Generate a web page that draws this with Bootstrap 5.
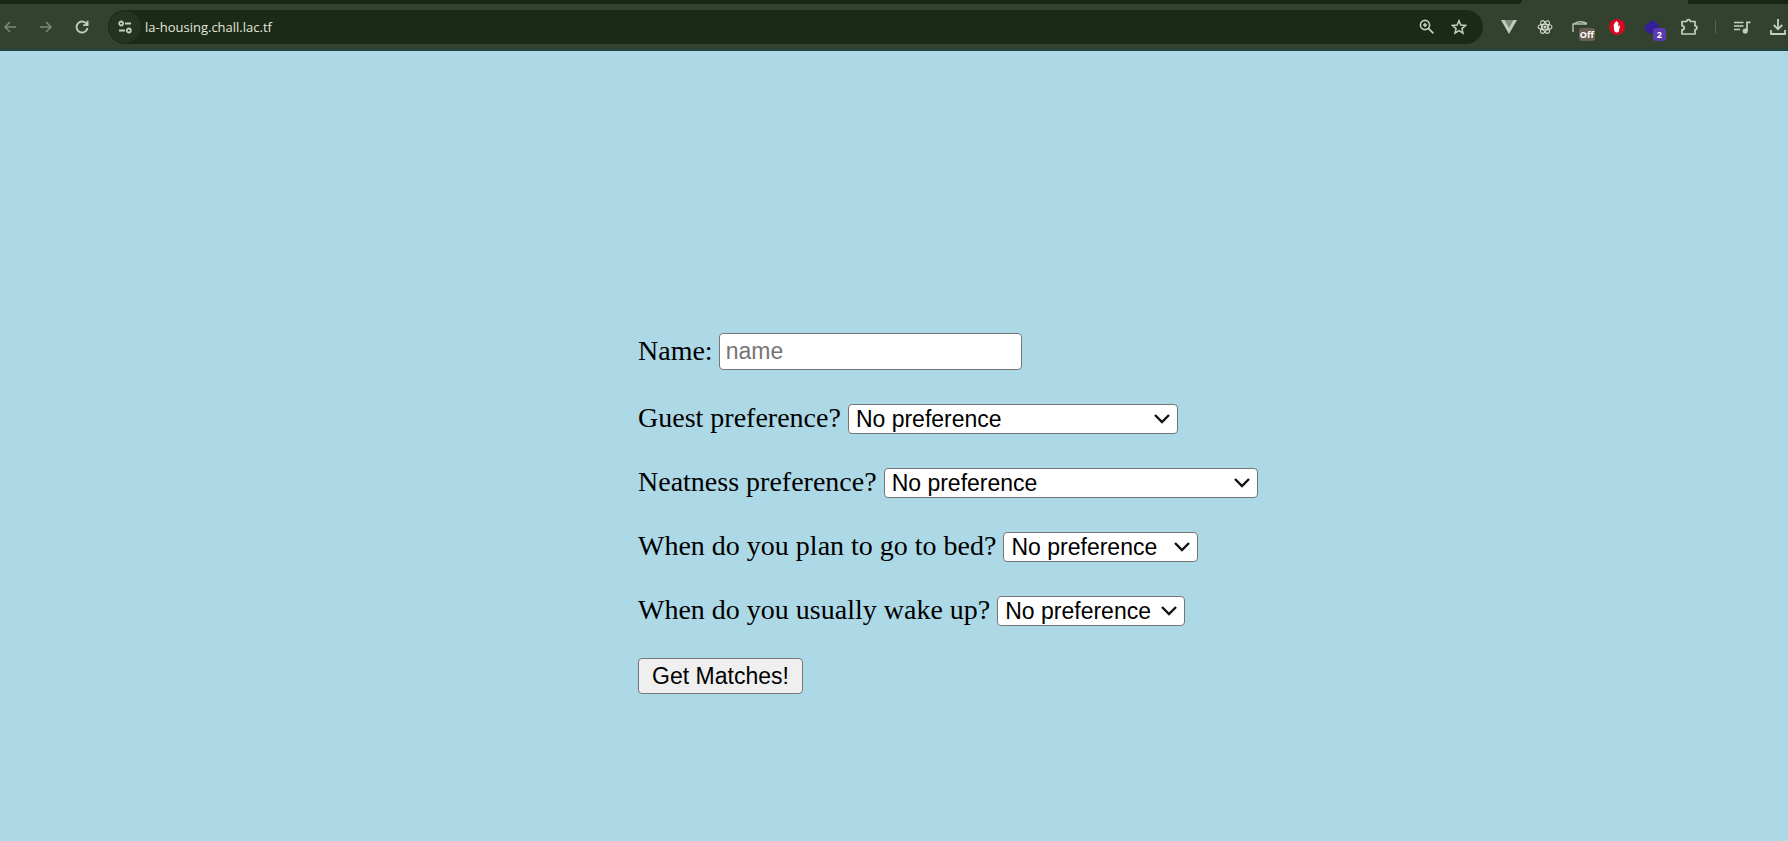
<!DOCTYPE html>
<html lang="en">
<head>
<meta charset="utf-8">
<meta name="viewport" content="width=device-width, initial-scale=1">
<title>LA Housing</title>
<link href="https://cdn.jsdelivr.net/npm/bootstrap@5.3.0/dist/css/bootstrap.min.css" rel="stylesheet">
<style>
  body { background: #add8e6; }
  .browser-bar { background: #33422f; border-bottom: 3px solid #27443b; height: 51px; overflow: hidden; }
  .tab-strip { height: 4px; }
  .tab-rest { background: #182512; }
  .tab-rest-start { border-bottom-right-radius: 4px; }
  .tab-rest-end { width: 100px; }
  .tab-current { width: 166px; }
  .tool-row { height: 44px; padding: 2px 0 0; margin: 0 -8px; }
  .tool { display: flex; align-items: center; justify-content: center; width: 36px; height: 36px; padding: 0; border: 0; background: none; color: #c3d0bd; flex: none; position: relative; }
  .tool:disabled { color: #7c8977; }
  .tool svg { display: block; }
  .address { height: 34px; background: #1c2917; border-radius: 17px; margin: 0 8px; padding-right: 8px; min-width: 0; }
  .address .tool { width: 32px; height: 32px; }
  .address-text { background: none; border: 0; outline: 0; color: #e0e8da; font: 13px/20px "Open Sans", "Noto Sans", sans-serif; min-width: 0; padding: 0 0 0 3px; }
  .address .site-info { background: #263321; border-radius: 50%; margin: 0 1px; }
  .counter { position: absolute; right: 5px; bottom: 4px; border-radius: 3px; padding: 0 3px; color: #fff; font: bold 9px/13px "Open Sans", sans-serif; }
  .counter-off { background: #6a5f50; right: 4px; padding: 0 1px; }
  .counter-two { background: #5a3aae; padding: 0 4px; }
  .tool-line { width: 1px; height: 14px; background: #53624e; margin: 0 8px; flex: none; }
  .page-area { padding: 282px 0 40px 108px; }
  .match-form { width: 620px; color: #000; font: 28px/32px "Liberation Serif", "Times New Roman", serif; }
  .match-form label { padding-bottom: 2px; }
  .form-line { height: 30px; margin-bottom: 34px; gap: 7px; white-space: nowrap; }
  .form-line-name { height: 37px; gap: 6px; }
  .form-line-last { margin-bottom: 32px; }
  .field { font: 23px/26px "Liberation Sans", Arial, sans-serif; color: #000; background-color: #fff; border: 1px solid #767676; border-radius: 4px; }
  .field-text { width: 303px; height: 37px; padding: 0 6px; }
  .field-text::placeholder { color: #757575; opacity: 1; }
  .field-pick { appearance: none; height: 30px; padding: 0 26px 0 7px; background-image: url("data:image/svg+xml,%3Csvg xmlns='http://www.w3.org/2000/svg' width='16' height='10' fill='none' stroke='%23111' stroke-width='2.4'%3E%3Cpath d='M1 1l7 7 7-7'/%3E%3C/svg%3E"); background-repeat: no-repeat; background-position: right 7px center; }
  .pick-guest { width: 330px; }
  .pick-neat { width: 375px; }
  .pick-bed { width: 195px; }
  .pick-wake { width: 188px; }
  .send { width: 165px; height: 36px; background: #efefef; padding: 0; }
</style>
</head>
<body>
<header class="browser-bar">
  <div class="tab-strip d-flex">
    <div class="tab-rest tab-rest-start flex-grow-1"></div>
    <div class="tab-current"></div>
    <div class="tab-rest tab-rest-end"></div>
  </div>
  <nav class="tool-row d-flex align-items-center" aria-label="Browser toolbar">
    <button class="tool" disabled aria-label="Back"><svg width="14" height="14" viewBox="0 0 14 14" fill="none" stroke="currentColor" stroke-width="1.5"><path d="M13 7H2M7 2L2 7l5 5"/></svg></button>
    <button class="tool" disabled aria-label="Forward"><svg width="14" height="14" viewBox="0 0 14 14" fill="none" stroke="currentColor" stroke-width="1.5"><path d="M1 7h11M7 2l5 5-5 5"/></svg></button>
    <button class="tool" aria-label="Reload"><svg width="14" height="14" viewBox="0 0 14 14" fill="none" stroke="currentColor" stroke-width="1.8"><path d="M12 4.5A5.5 5.5 0 1 0 12.5 8M12.6.8v4.4H8.2"/></svg></button>
    <div class="address d-flex align-items-center flex-grow-1">
      <button class="tool site-info" aria-label="Site information"><svg width="14" height="14" viewBox="0 0 14 14" fill="none" stroke="currentColor" stroke-width="1.8"><circle cx="3.2" cy="3.5" r="2"/><path d="M7 3.5h6M1 10.5h6"/><circle cx="10.8" cy="10.5" r="2"/></svg></button>
      <input class="address-text flex-grow-1" type="text" value="la-housing.chall.lac.tf" aria-label="Address">
      <button class="tool" aria-label="Zoom"><svg width="16" height="16" viewBox="0 0 16 16" fill="none" stroke="currentColor" stroke-width="1.6"><circle cx="6" cy="6" r="4.6"/><path d="M9.4 9.4l5 5M6 4v4M4 6h4"/></svg></button>
      <button class="tool" aria-label="Bookmark"><svg width="16" height="16" viewBox="0 0 16 16" fill="none" stroke="currentColor" stroke-width="1.5"><path d="M8 1.7l1.8 4.4 4.7.4-3.6 3.1 1.1 4.6L8 11.7l-4 2.5 1.1-4.6-3.6-3.1 4.7-.4z"/></svg></button>
    </div>
    <button class="tool" aria-label="Vue devtools"><svg width="16" height="14" viewBox="0 0 16 14"><path d="M0 0h16L8 14z" fill="#c2c9be"/><path d="M3.5 0h9L8 8z" fill="#7f8b7b"/></svg></button>
    <button class="tool" aria-label="React devtools"><svg width="16" height="16" viewBox="0 0 16 16" fill="none" stroke="#d3dccd" stroke-width="1.1"><ellipse cx="8" cy="8" rx="7" ry="2.8"/><ellipse cx="8" cy="8" rx="7" ry="2.8" transform="rotate(60 8 8)"/><ellipse cx="8" cy="8" rx="7" ry="2.8" transform="rotate(120 8 8)"/><circle cx="8" cy="8" r="1" fill="#d3dccd"/></svg></button>
    <button class="tool" aria-label="Extension, off"><svg width="18" height="16" viewBox="0 0 18 16" fill="none" stroke="#b5bfae" stroke-width="1.5"><path d="M1 13V5h14M2 5c3-3 9-3 13-.5"/></svg><span class="counter counter-off">Off</span></button>
    <button class="tool" aria-label="Blocker"><svg width="16" height="16" viewBox="0 0 16 16"><circle cx="8" cy="8" r="8" fill="#d80a22"/><path d="M4.8 8.3V5.2c0-.8 1-.8 1 0V3.5c0-.8 1.1-.8 1.1 0v-.8c0-.8 1.2-.8 1.2 0v.8c0-.8 1.2-.8 1.2 0v4.2l.7-.9c.5-.5 1.2-.2 1 .4L9.800 12.500c-.8 1.300-3.300 1.200-4.200-.3-.6-1-.8-2.400-.8-3.900z" fill="#fff"/></svg></button>
    <button class="tool" aria-label="Extension, 2 items"><svg width="18" height="16" viewBox="0 0 18 16" fill="#34209a"><path d="M6 1l5 2 4 3-2 7-6 2-6-3V6l4-1z"/></svg><span class="counter counter-two">2</span></button>
    <button class="tool" aria-label="Extensions"><svg width="18" height="18" viewBox="0 0 18 18" fill="none" stroke="currentColor" stroke-width="1.7" stroke-linejoin="round"><path d="M2 3.500h4.600c0-2.600 3.800-2.600 3.800 0H15v4.300c2.500 0 2.500 3.700 0 3.700V16H2v-4.200c3 0 3-4 0-4z"/></svg></button>
    <div class="tool-line"></div>
    <button class="tool" aria-label="Media controls"><svg width="17" height="14" viewBox="0 0 17 14" fill="none" stroke="currentColor" stroke-width="1.700"><path d="M0 2.500h9.500M0 6h9.500M0 9.500h6M13 11V2.300h3.500"/><circle cx="11.200" cy="11" r="1.700" fill="currentColor"/></svg></button>
    <button class="tool" aria-label="Downloads"><svg width="16" height="16" viewBox="0 0 16 16" fill="none" stroke="currentColor" stroke-width="1.800"><path d="M8 0v10M3.800 6L8 10.200 12.200 6M1 11v4h14v-4"/></svg></button>
  </nav>
</header>
<main class="page-area d-flex justify-content-center">
  <form class="match-form">
    <div class="form-line form-line-name d-flex align-items-center"><label for="name">Name:</label><input class="field field-text" id="name" type="text" placeholder="name"></div>
    <div class="form-line d-flex align-items-center"><label for="guests">Guest preference?</label><select class="field field-pick pick-guest" id="guests"><option>No preference</option></select></div>
    <div class="form-line d-flex align-items-center"><label for="neatness">Neatness preference?</label><select class="field field-pick pick-neat" id="neatness"><option>No preference</option></select></div>
    <div class="form-line d-flex align-items-center"><label for="sleep">When do you plan to go to bed?</label><select class="field field-pick pick-bed" id="sleep"><option>No preference</option></select></div>
    <div class="form-line form-line-last d-flex align-items-center"><label for="awake">When do you usually wake up?</label><select class="field field-pick pick-wake" id="awake"><option>No preference</option></select></div>
    <button class="field send d-block" type="button">Get Matches!</button>
  </form>
</main>
<script src="https://cdn.jsdelivr.net/npm/bootstrap@5.3.0/dist/js/bootstrap.bundle.min.js"></script>
</body>
</html>
